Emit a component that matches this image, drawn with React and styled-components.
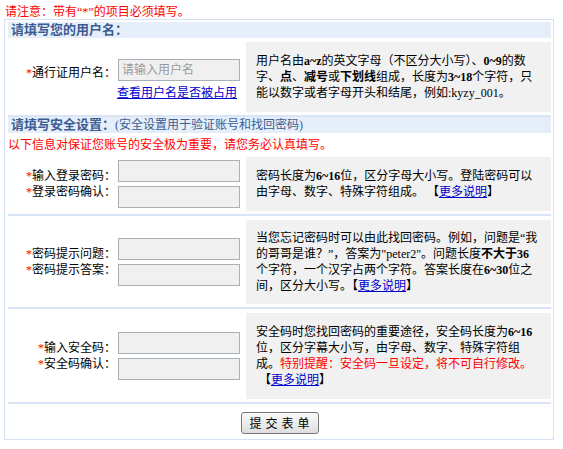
import React from 'react';
import styled, { createGlobalStyle } from 'styled-components';

const Global = createGlobalStyle`
  body {
    margin: 0;
    background: #fff;
  }
`;

const Page = styled.div`
  padding: 6px 0 0 4px;
  font: 12px/16px "Liberation Serif", "Noto Sans CJK SC", serif;
  color: #000;
`;

const Notice = styled.div`
  color: #f00;
  line-height: 13px;
  padding-left: 1px;
`;

const Box = styled.div`
  width: 550px;
  box-sizing: border-box;
  border: 1px solid #d4e1f4;
  padding: 2px 2px 5px 3px;
`;

const SectionHeader = styled.div`
  background: #e6eefa;
  height: 16px;
  line-height: 16px;
  padding-left: 3px;
  color: #3b5c92;
  font-size: 13px;
  font-weight: bold;

  span {
    font-size: 12px;
    font-weight: normal;
  }
`;

const Warn = styled.div`
  color: #f00;
  padding: 4px 0 0 0;
  line-height: 16px;
`;

const Row = styled.div`
  display: grid;
  grid-template-columns: 110px 128px 305px;
  align-items: center;
  padding: 4px 0 3px;
  border-bottom: ${p => (p.$plain ? 'none' : '2px solid #d9e5f6')};
`;

const Label = styled.div`
  text-align: right;
  padding-right: 2px;
  padding-bottom: ${p => p.$lift || 0}px;
  line-height: 16px;
  white-space: nowrap;
`;

const Star = styled.span`
  color: #f00;
`;

const Fields = styled.div`
  display: flex;
  flex-direction: column;
  gap: 4px;
  padding-top: ${p => p.$drop || 0}px;
`;

const Input = styled.input`
  width: 122px;
  height: 22px;
  box-sizing: border-box;
  border: 1px solid #a9b0b8;
  background: #f0f0f0;
  margin: 0;
  padding: 0 3px;
  font: 12px "Liberation Serif", "Noto Sans CJK SC", serif;
  outline: none;

  &::placeholder {
    color: #9a9a9a;
  }
`;

const Link = styled.a`
  color: #0000cc;
  text-decoration: underline;
  line-height: 16px;
  margin-left: -1px;
  white-space: nowrap;
  cursor: pointer;
`;

const Help = styled.div`
  background: #f1f1f1;
  padding: ${p => p.$pad}px 10px;
  line-height: 16px;
  white-space: nowrap;
`;

const Red = styled.span`
  color: #f00;
`;

const More = styled.a`
  color: #0000cc;
  text-decoration: underline;
  cursor: pointer;
`;

const Actions = styled.div`
  display: flex;
  justify-content: center;
  padding-top: 8px;
`;

const Submit = styled.button`
  width: 78px;
  height: 22px;
  border: 1px solid #777;
  border-radius: 3px;
  background: linear-gradient(#fafafa, #dedede);
  font: 12px "Liberation Serif", "Noto Sans CJK SC", serif;
  letter-spacing: 4px;
  padding: 0 0 0 4px;
  color: #000;
`;

export default function App() {
  return (
    <Page>
      <Global />
      <Notice>请注意：带有“*”的项目必须填写。</Notice>
      <Box>
        <SectionHeader>请填写您的用户名：</SectionHeader>
        <Row>
          <Label $lift={8}>
            <Star>*</Star>通行证用户名：
          </Label>
          <Fields $drop={6}>
            <Input placeholder="请输入用户名" />
            <Link>查看用户名是否被占用</Link>
          </Fields>
          <Help $pad={11}>
            用户名由<b>a~z</b>的英文字母（不区分大小写）、<b>0~9</b>的数<br />
            字、<b>点</b>、<b>减号</b>或<b>下划线</b>组成，长度为<b>3~18</b>个字符，只<br />
            能以数字或者字母开头和结尾，例如:kyzy_001。
          </Help>
        </Row>

        <SectionHeader>
          请填写安全设置：<span>(安全设置用于验证账号和找回密码)</span>
        </SectionHeader>
        <Warn>以下信息对保证您账号的安全极为重要，请您务必认真填写。</Warn>
        <Row>
          <Label>
            <Star>*</Star>输入登录密码：<br />
            <Star>*</Star>登录密码确认：
          </Label>
          <Fields>
            <Input type="password" />
            <Input type="password" />
          </Fields>
          <Help $pad={11}>
            密码长度为<b>6~16</b>位，区分字母大小写。登陆密码可以<br />
            由字母、数字、特殊字符组成。 【<More>更多说明</More>】
          </Help>
        </Row>

        <Row>
          <Label>
            <Star>*</Star>密码提示问题：<br />
            <Star>*</Star>密码提示答案：
          </Label>
          <Fields>
            <Input />
            <Input />
          </Fields>
          <Help $pad={10}>
            当您忘记密码时可以由此找回密码。例如，问题是“我<br />
            的哥哥是谁？”，答案为"peter2"。问题长度<b>不大于36</b><br />
            个字符，一个汉字占两个字符。答案长度在<b>6~30</b>位之<br />
            间，区分大小写。【<More>更多说明</More>】
          </Help>
        </Row>

        <Row>
          <Label>
            <Star>*</Star>输入安全码：<br />
            <Star>*</Star>安全码确认：
          </Label>
          <Fields>
            <Input type="password" />
            <Input type="password" />
          </Fields>
          <Help $pad={11}>
            安全码时您找回密码的重要途径，安全码长度为<b>6~16</b><br />
            位，区分字幕大小写，由字母、数字、特殊字符组<br />
            成。<Red>特别提醒：安全码一旦设定，将不可自行修改。</Red><br />
            &nbsp;【<More>更多说明</More>】
          </Help>
        </Row>

        <Actions>
          <Submit type="button">提交表单</Submit>
        </Actions>
      </Box>
    </Page>
  );
}
